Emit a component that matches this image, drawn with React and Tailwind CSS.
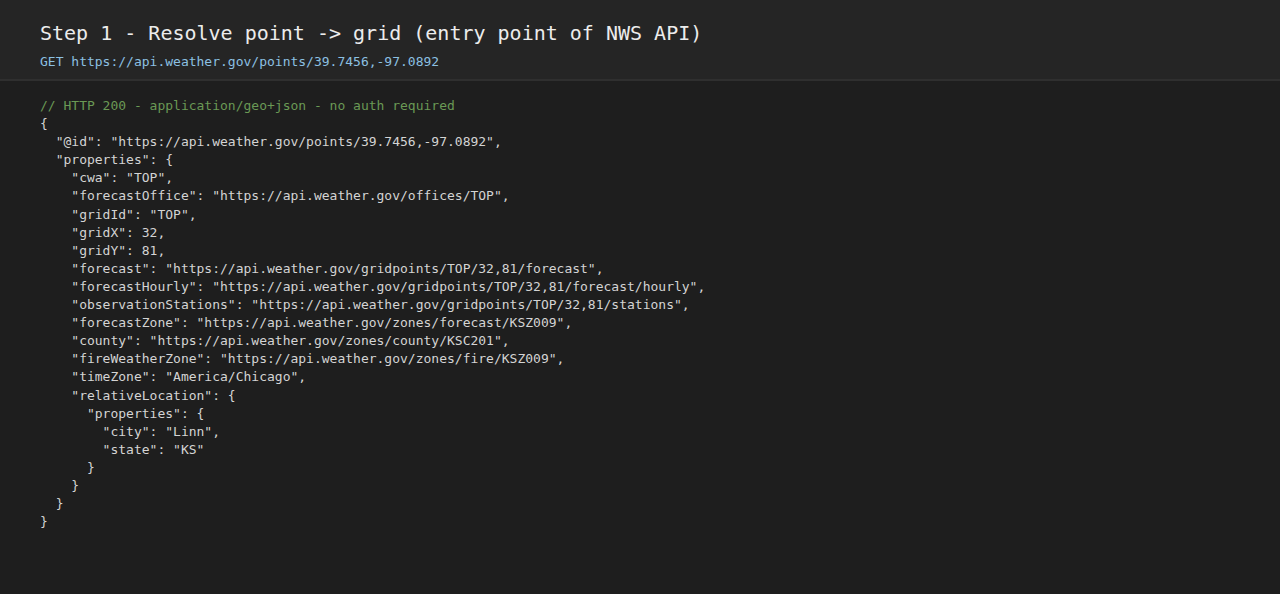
const lines = [
  '{',
  '  "@id": "https://api.weather.gov/points/39.7456,-97.0892",',
  '  "properties": {',
  '    "cwa": "TOP",',
  '    "forecastOffice": "https://api.weather.gov/offices/TOP",',
  '    "gridId": "TOP",',
  '    "gridX": 32,',
  '    "gridY": 81,',
  '    "forecast": "https://api.weather.gov/gridpoints/TOP/32,81/forecast",',
  '    "forecastHourly": "https://api.weather.gov/gridpoints/TOP/32,81/forecast/hourly",',
  '    "observationStations": "https://api.weather.gov/gridpoints/TOP/32,81/stations",',
  '    "forecastZone": "https://api.weather.gov/zones/forecast/KSZ009",',
  '    "county": "https://api.weather.gov/zones/county/KSC201",',
  '    "fireWeatherZone": "https://api.weather.gov/zones/fire/KSZ009",',
  '    "timeZone": "America/Chicago",',
  '    "relativeLocation": {',
  '      "properties": {',
  '        "city": "Linn",',
  '        "state": "KS"',
  '      }',
  '    }',
  '  }',
  '}',
];

export default function App() {
  return (
    <div
      className="w-full h-[594px] bg-[#1e1e1e] flex flex-col overflow-hidden"
      style={{ fontFamily: '"DejaVu Sans Mono", "Liberation Mono", monospace' }}
    >
      <div className="bg-[#252525] border-b-2 border-[#2f2f2f] px-10 pt-[19px] pb-[8px]">
        <h1 className="text-[20px] leading-7 text-[#ececec]">
          Step 1 - Resolve point -&gt; grid (entry point of NWS API)
        </h1>
        <div className="mt-[6px] text-[13px] leading-[18px] text-[#8cc0e2]">
          GET https://api.weather.gov/points/39.7456,-97.0892
        </div>
      </div>
      <div className="px-10 pt-[16px] text-[13px] leading-[18.1px] text-[#d4d4d4] whitespace-pre">
        <div className="text-[#6a9955]">// HTTP 200 - application/geo+json - no auth required</div>
        {lines.map((l, i) => (
          <div key={i}>{l}</div>
        ))}
      </div>
    </div>
  );
}
